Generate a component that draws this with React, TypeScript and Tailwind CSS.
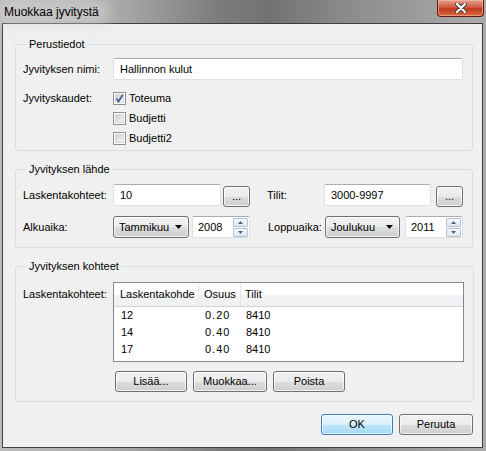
import React from "react";

const font = { fontFamily: '"Liberation Sans", Arial, sans-serif' };

function Button({ label, width, primary }: { label: string; width: string; primary?: boolean }) {
  return (
    <button
      className={`${width} h-[21px] rounded-[3px] border text-[11px] text-black shadow-[inset_0_0_0_1px_rgba(255,255,255,0.7)] ${
        primary
          ? "border-[#3c7fb1] bg-[linear-gradient(#eaf6fd_0%,#d9f0fc_50%,#bee6fd_51%,#a7d9f5_100%)]"
          : "border-[#707070] bg-[linear-gradient(#f2f2f2_0%,#ebebeb_50%,#dddddd_51%,#cfcfcf_100%)]"
      }`}
    >
      {label}
    </button>
  );
}

function TextBox({ value, width }: { value: string; width: string }) {
  return (
    <div
      className={`${width} flex h-[22px] items-center rounded-[2px] border border-[#dbdfe6] border-t-[#abadb3] bg-white pl-[6px] text-[11px]`}
    >
      {value}
    </div>
  );
}

function Check({ label, checked }: { label: string; checked?: boolean }) {
  return (
    <div className="flex h-[20px] items-center gap-[3px] text-[11px]">
      <div className="flex h-[13px] w-[13px] items-center justify-center border border-[#8e8f8f] bg-white">
        <div className="relative h-[9px] w-[9px] border border-[#d6d8dc] bg-[linear-gradient(135deg,#cbcfd5,#f6f6f6)]">
          {checked && (
            <svg viewBox="0 0 11 11" className="absolute -left-[2px] -top-[2px] h-[11px] w-[11px]">
              <path d="M2.5 5.5 L4.5 8.5 L8.8 1.8" fill="none" stroke="#4a5f97" strokeWidth="1.8" />
            </svg>
          )}
        </div>
      </div>
      <span>{label}</span>
    </div>
  );
}

function Combo({ value, width }: { value: string; width: string }) {
  return (
    <div
      className={`${width} flex h-[22px] items-center justify-between rounded-[3px] border border-[#707070] bg-[linear-gradient(#f2f2f2_0%,#ebebeb_50%,#dddddd_51%,#cfcfcf_100%)] pl-[5px] pr-[6px] text-[11px] shadow-[inset_0_0_0_1px_rgba(255,255,255,0.7)]`}
    >
      <span>{value}</span>
      <svg viewBox="0 0 7 4" className="h-[4px] w-[7px]">
        <path d="M0 0 H7 L3.5 4 Z" fill="#000" />
      </svg>
    </div>
  );
}

function Spin({ value }: { value: string }) {
  return (
    <div className="flex h-[22px] w-[58px] items-center justify-between rounded-[2px] border border-[#dbdfe6] border-t-[#abadb3] bg-white pl-[5px] pr-[1px] text-[11px]">
      <span>{value}</span>
      <div className="flex flex-col gap-[1px]">
        {[0, 1].map((i) => (
          <div
            key={i}
            className="flex h-[9px] w-[15px] items-center justify-center rounded-[1px] border border-[#b7c3d3] bg-[linear-gradient(#f6f9fc,#dfe7f1)]"
          >
            <svg viewBox="0 0 5 3" className="h-[3px] w-[5px]">
              <path d={i === 0 ? "M0 3 H5 L2.5 0 Z" : "M0 0 H5 L2.5 3 Z"} fill="#4d6185" />
            </svg>
          </div>
        ))}
      </div>
    </div>
  );
}

function Group({ title, children, className }: { title: string; children: React.ReactNode; className?: string }) {
  return (
    <fieldset className={`w-[458px] rounded-[3px] border border-[#d5dfe5] pl-[7px] pr-[9px] ${className ?? ""}`}>
      <legend className="ml-[4px] px-[2px] text-[11px] leading-[14px]">{title}</legend>
      {children}
    </fieldset>
  );
}

const rows = [
  { k: "12", o: "0.20", t: "8410" },
  { k: "14", o: "0.40", t: "8410" },
  { k: "17", o: "0.40", t: "8410" },
];

export default function App() {
  return (
    <div
      className="flex h-[451px] w-[486px] flex-col bg-[linear-gradient(90deg,#bcbcbc_0%,#a8a8a8_25%,#7c7c7c_45%,#727272_55%,#909090_75%,#ababab_100%)] text-black"
      style={font}
    >
      <div className="relative flex h-[23px] shrink-0 items-center pl-[4px]">
        <span className="rounded-full bg-[#d6d6d6]/50 pr-[6px] text-[12px] shadow-[0_0_12px_6px_rgba(215,215,215,0.5)]">
          Muokkaa jyvitystä
        </span>
        <div className="absolute right-[2px] top-0 flex h-[17px] w-[47px] items-center justify-center rounded-b-[4px] border border-t-0 border-[#5a1f14] bg-[linear-gradient(#e5a08f_0%,#d25b43_45%,#c0391c_55%,#d86a44_100%)] shadow-[inset_0_0_0_1px_rgba(255,200,180,0.5)]">
          <svg viewBox="0 0 12 10" className="h-[10px] w-[12px]">
            <path d="M2 1 L10 9 M10 1 L2 9" stroke="#3b3b3b" strokeWidth="4" strokeLinecap="round" />
            <path d="M2 1 L10 9 M10 1 L2 9" stroke="#ffffff" strokeWidth="2.2" strokeLinecap="round" />
          </svg>
        </div>
      </div>

      <div className="mb-[3px] ml-[2px] mr-[3px] flex flex-1 flex-col border border-[#3f3f3f] bg-[#f0f0f0] pl-[12px] pt-[13px]">
        <Group title="Perustiedot" className="pb-[2px] pt-[7px]">
          <div className="flex items-center">
            <span className="w-[90px] text-[11px]">Jyvityksen nimi:</span>
            <TextBox value="Hallinnon kulut" width="w-[350px]" />
          </div>
          <div className="mt-[8px] flex">
            <span className="flex h-[20px] w-[90px] items-center text-[11px]">Jyvityskaudet:</span>
            <div className="flex flex-col">
              <Check label="Toteuma" checked />
              <Check label="Budjetti" />
              <Check label="Budjetti2" />
            </div>
          </div>
        </Group>

        <Group title="Jyvityksen lähde" className="mt-[11px] pb-[9px] pt-[7px]">
          <div className="flex items-center">
            <span className="w-[90px] text-[11px]">Laskentakohteet:</span>
            <TextBox value="10" width="w-[108px]" />
            <div className="ml-[2px]">
              <Button label="..." width="w-[27px]" />
            </div>
            <span className="ml-[17px] w-[57px] text-[11px]">Tilit:</span>
            <TextBox value="3000-9997" width="w-[107px]" />
            <div className="ml-[5px]">
              <Button label="..." width="w-[27px]" />
            </div>
          </div>
          <div className="mt-[9px] flex items-center">
            <span className="w-[90px] text-[11px]">Alkuaika:</span>
            <Combo value="Tammikuu" width="w-[76px]" />
            <div className="ml-[3px]">
              <Spin value="2008" />
            </div>
            <span className="ml-[18px] w-[57px] text-[11px]">Loppuaika:</span>
            <Combo value="Joulukuu" width="w-[75px]" />
            <div className="ml-[5px]">
              <Spin value="2011" />
            </div>
          </div>
        </Group>

        <Group title="Jyvityksen kohteet" className="mt-[11px] pb-[9px] pt-[9px]">
          <div className="flex">
            <span className="w-[90px] pt-[4px] text-[11px]">Laskentakohteet:</span>
            <div className="flex h-[80px] w-[351px] flex-col border border-[#828790] bg-white text-[11px]">
              <div className="flex h-[24px] shrink-0 border-b border-[#d5d5d5] bg-[linear-gradient(#ffffff_0%,#ffffff_50%,#f3f4f6_51%,#eef0f2_100%)]">
                <div className="flex w-[85px] items-center border-r border-[#e3e5e8] pl-[6px]">Laskentakohde</div>
                <div className="flex w-[42px] items-center border-r border-[#e3e5e8] pl-[5px]">Osuus</div>
                <div className="flex flex-1 items-center pl-[4px]">Tilit</div>
              </div>
              <div>
                {rows.map((r) => (
                  <div key={r.k} className="flex h-[17px] items-center">
                    <span className="w-[85px] pl-[7px]">{r.k}</span>
                    <span className="w-[42px] pl-[6px] tracking-[1px]">{r.o}</span>
                    <span className="pl-[5px]">{r.t}</span>
                  </div>
                ))}
              </div>
            </div>
          </div>
          <div className="ml-[92px] mt-[9px] flex gap-[6px]">
            <Button label="Lisää..." width="w-[72px]" />
            <Button label="Muokkaa..." width="w-[74px]" />
            <Button label="Poista" width="w-[72px]" />
          </div>
        </Group>

        <div className="mt-[12px] flex w-[458px] justify-end gap-[6px]">
          <Button label="OK" width="w-[72px]" primary />
          <Button label="Peruuta" width="w-[74px]" />
        </div>
      </div>
    </div>
  );
}
